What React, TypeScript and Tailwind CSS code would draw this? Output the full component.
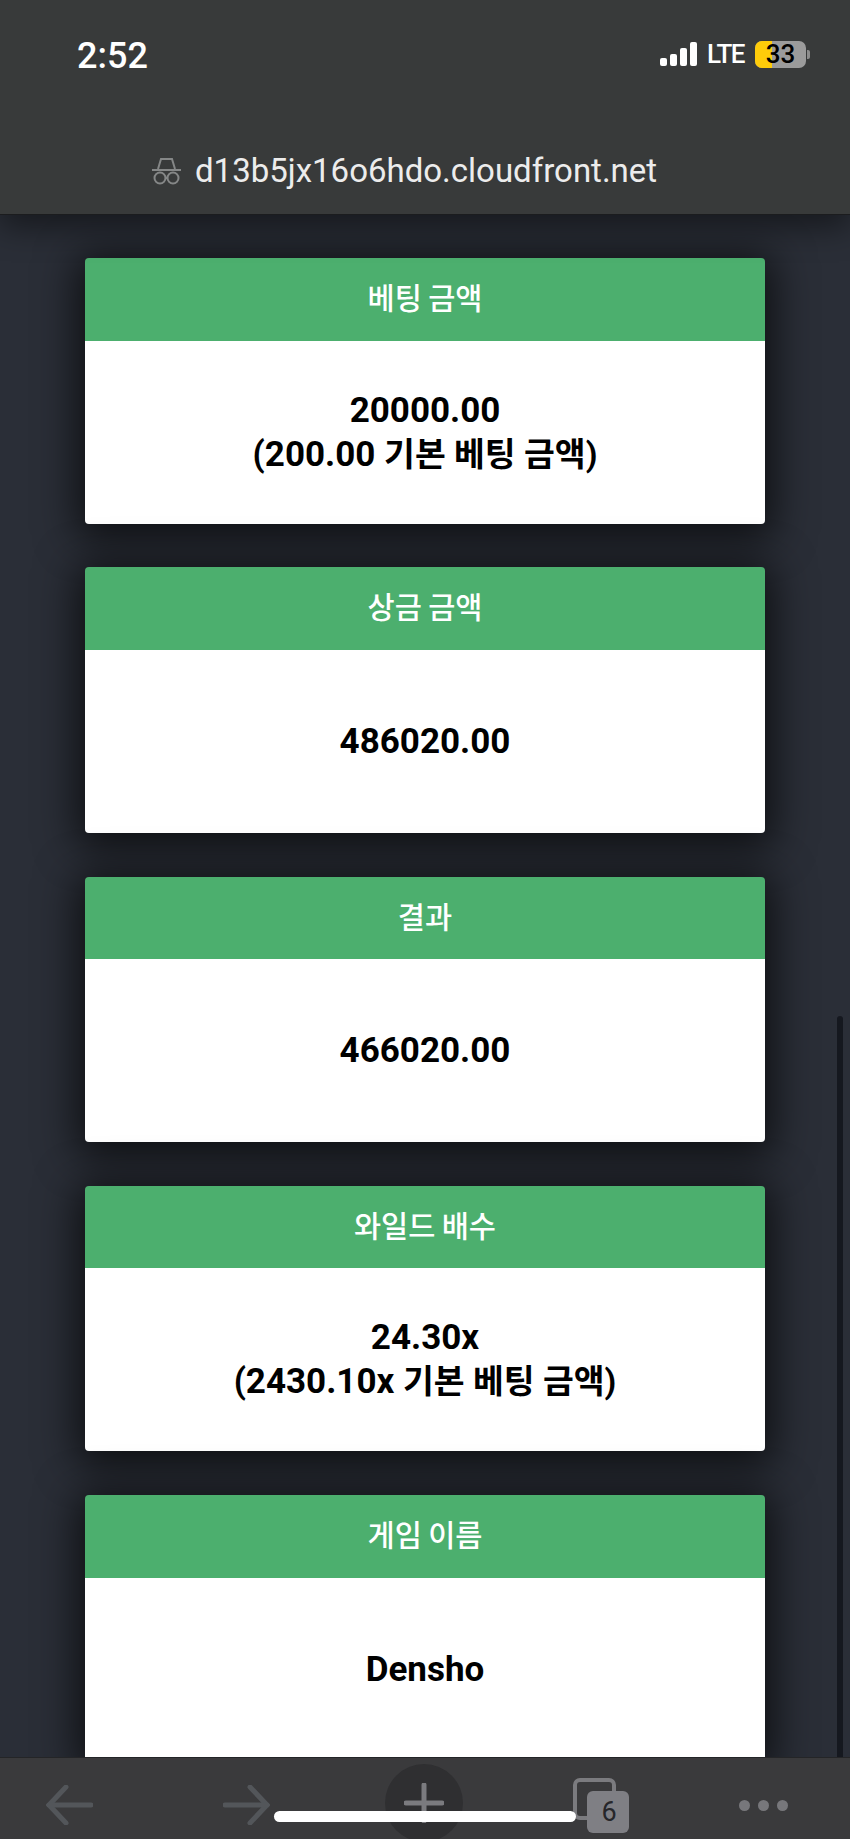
import React from 'react';

const sans = 'font-["Roboto","Noto_Sans_CJK_KR",sans-serif]';

const cards = [
  { title: '베팅 금액', value: '20000.00', base: '(200.00' },
  { title: '상금 금액', value: '486020.00' },
  { title: '결과', value: '466020.00' },
  { title: '와일드 배수', value: '24.30x', base: '(2430.10x' },
  { title: '게임 이름', value: 'Densho' },
];

const IncognitoIcon = () => (
  <svg width="29" height="27" viewBox="0 0 29 27" fill="none" stroke="#858787" strokeWidth="2">
    <path d="M6 11 L9 1 H20 L23 11" />
    <path d="M0 12 H29" />
    <circle cx="8" cy="20" r="5.5" />
    <circle cx="21" cy="20" r="5.5" />
    <path d="M13.5 20 H15.5" />
  </svg>
);

const StatusBar = () => (
  <div className="flex items-start justify-between pl-[77px] pr-[40px] pt-[36px]">
    <span className="text-[36px] leading-[40px] font-medium text-white">2:52</span>
    <div className="flex items-center mt-[4px]">
      <div className="flex items-end gap-[3px] h-[24px]">
        <div className="w-[7px] h-[8px] rounded-[2px] bg-white" />
        <div className="w-[7px] h-[12px] rounded-[2px] bg-white" />
        <div className="w-[7px] h-[18px] rounded-[2px] bg-white" />
        <div className="w-[7px] h-[24px] rounded-[2px] bg-white" />
      </div>
      <span className="ml-[10px] text-[26px] leading-[28px] tracking-[-1.5px] font-medium text-white">LTE</span>
      <div className="relative ml-[11px] w-[51px] h-[27px] rounded-[7px] bg-[#9b9b9b] flex items-center justify-center">
        <div className="absolute left-0 top-0 bottom-0 w-[17px] rounded-l-[7px] bg-[#ffcc0a]" />
        <span className="relative text-[26px] leading-[26px] font-medium text-black">33</span>
      </div>
      <div className="ml-[1px] w-[3px] h-[9px] rounded-r-[2px] bg-[#8d8d8d]" />
    </div>
  </div>
);

const Card = ({ title, value, base }: { title: string; value: string; base?: string }) => (
  <div className="rounded-[4px] overflow-hidden shadow-[0_6px_40px_8px_rgba(0,0,0,0.68)]">
    <div className="h-[82.5px] bg-[#4caf6e] flex items-center justify-center text-[29.5px] [word-spacing:-1px] font-medium text-white">
      {title}
    </div>
    <div className="h-[183px] pt-[1px] bg-white flex flex-col items-center justify-center text-[35px] leading-[44px] font-bold text-black">
      <div>{value}</div>
      {base && (
        <div>
          {base} <span className="text-[33.5px]">기본 베팅 금액)</span>
        </div>
      )}
    </div>
  </div>
);

const BottomBar = () => (
  <div className="h-[82px] shrink-0 bg-[#3a3a3c] border-t border-[#242527] flex items-start overflow-hidden relative z-10">
    <svg width="47" height="40" viewBox="0 0 47 40" fill="none" stroke="#53565a" strokeWidth="5" strokeLinecap="round" className="ml-[46px] mt-[27px]">
      <path d="M20 2 L3 20 L20 38" />
      <path d="M3 20 H45" />
    </svg>
    <svg width="47" height="40" viewBox="0 0 47 40" fill="none" stroke="#53565a" strokeWidth="5" strokeLinecap="round" className="ml-[130px] mt-[27px]">
      <path d="M27 2 L44 20 L27 38" />
      <path d="M2 20 H44" />
    </svg>
    <div className="ml-[115px] mt-[6px] w-[78px] h-[78px] shrink-0 rounded-full bg-[#2f2f31] flex items-center justify-center">
      <svg width="40" height="40" viewBox="0 0 40 40" fill="none" stroke="#7b7b7f" strokeWidth="5" strokeLinecap="round">
        <path d="M20 2 V38" />
        <path d="M2 20 H38" />
      </svg>
    </div>
    <div className="relative ml-[110px] mt-[20px] w-[56px] h-[55px] shrink-0">
      <div className="absolute left-0 top-0 w-[43px] h-[42px] rounded-[7px] border-[4px] border-[#7b7b7f]" />
      <div className="absolute left-[14px] top-[13px] w-[42px] h-[42px] rounded-[6px] bg-[#7f7f84] flex items-center justify-center pl-[2px] text-[27px] text-[#26262a]">
        6
      </div>
    </div>
    <div className="ml-[110px] mt-[42px] flex gap-[8px]">
      <div className="w-[11px] h-[11px] rounded-full bg-[#77777b]" />
      <div className="w-[11px] h-[11px] rounded-full bg-[#77777b]" />
      <div className="w-[11px] h-[11px] rounded-full bg-[#77777b]" />
    </div>
  </div>
);

export default function App() {
  return (
    <div className={`${sans} relative w-[850px] h-[1839px] overflow-hidden flex flex-col bg-[#2a2e37]`}>
      <div className="h-[215px] shrink-0 bg-[#383a3a] border-b border-[#1b1c1e] relative z-10 shadow-[0_12px_30px_rgba(0,0,0,0.45)]">
        <StatusBar />
        <div className="flex items-center mt-[75px] pl-[152px]">
          <IncognitoIcon />
          <span className="ml-[14px] text-[33px] leading-[40px] text-[#ececec]">d13b5jx16o6hdo.cloudfront.net</span>
        </div>
      </div>

      {/* results list */}
      <div className="flex-1 min-h-0 overflow-hidden px-[85px] pt-[43px] flex flex-col gap-[43.75px]">
        {cards.map((card) => (
          <div key={card.title} className="shrink-0">
            <Card title={card.title} value={card.value} base={card.base} />
          </div>
        ))}
      </div>

      <BottomBar />

      <div className="absolute left-[837px] top-[1016px] w-[6px] h-[741px] rounded-t-full bg-[#15181f]" />
      <div className="absolute z-20 left-[274px] top-[1811px] w-[302px] h-[11px] rounded-full bg-white" />
    </div>
  );
}
